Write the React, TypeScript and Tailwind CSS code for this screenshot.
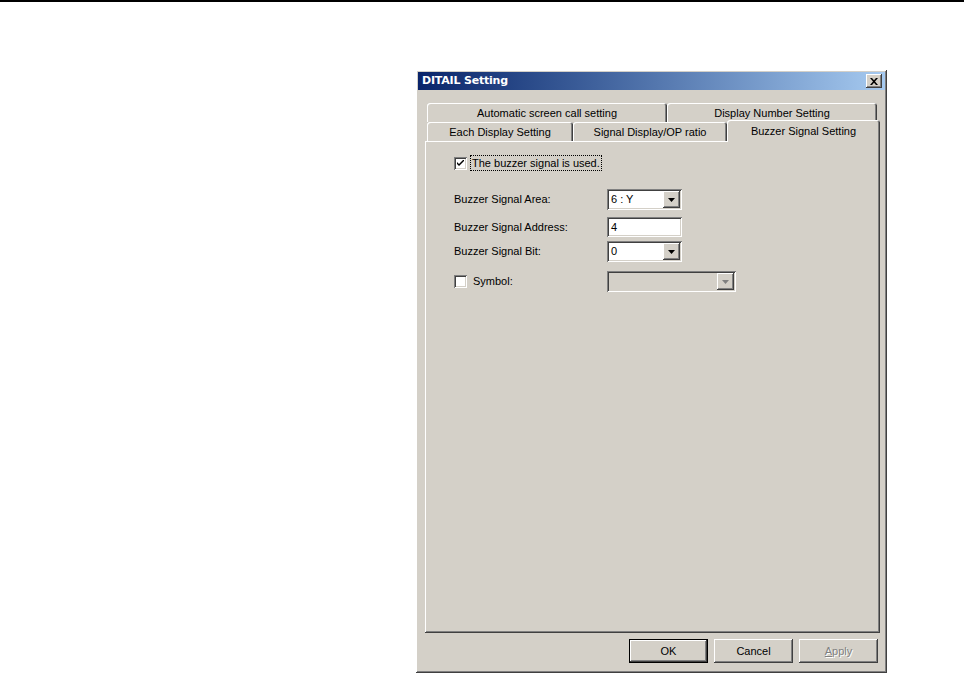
import React from 'react';

const raised =
  'shadow-[inset_-1px_-1px_#404040,inset_1px_1px_#ffffff,inset_-2px_-2px_#808080,inset_2px_2px_#d4d0c8]';
const sunken =
  'shadow-[inset_1px_1px_#808080,inset_-1px_-1px_#ffffff,inset_2px_2px_#404040,inset_-2px_-2px_#d4d0c8]';

function Arrow({ disabled }: { disabled?: boolean }) {
  return (
    <svg width="7" height="4" viewBox="0 0 7 4">
      <polygon points="0,0 7,0 3.5,4" fill={disabled ? '#808080' : '#000000'} />
    </svg>
  );
}

function Combo({ value, width, disabled }: { value: string; width: string; disabled?: boolean }) {
  return (
    <div className={`${width} h-[21px] ${sunken} ${disabled ? 'bg-[#d4d0c8]' : 'bg-white'} flex items-center p-[2px]`}>
      <div className="flex-1 pl-[2px] leading-none">{value}</div>
      <div className={`w-[17px] h-[17px] bg-[#d4d0c8] ${raised} flex items-center justify-center`}>
        <Arrow disabled={disabled} />
      </div>
    </div>
  );
}

function Check({ checked }: { checked?: boolean }) {
  return (
    <div className={`w-[13px] h-[13px] bg-white ${sunken} flex items-center justify-center`}>
      {checked && (
        <svg width="7" height="7" viewBox="0 0 7 7">
          <path d="M0 2 L0 4 L2 6 L7 1 L7 -1 L2 4 Z" fill="#000" />
        </svg>
      )}
    </div>
  );
}

function BackTab({ label, width }: { label: string; width: string }) {
  return (
    <div
      className={`${width} h-[19px] rounded-t-[3px] bg-[#d4d0c8] shadow-[inset_1px_1px_#ffffff,inset_-1px_0_#404040,inset_-2px_0_#808080] flex items-center justify-center pt-[2px]`}
    >
      {label}
    </div>
  );
}

export default function App() {
  return (
    <div className="min-h-screen bg-white text-black text-[11px] font-['Liberation_Sans',Arial,sans-serif]">
      <div className="h-[2px] bg-black" />

      <div className={`ml-[416px] mt-[68px] w-[471px] h-[603px] bg-[#d4d0c8] p-[2px] ${raised}`}>
        {/* Title bar */}
        <div className="h-[18px] bg-gradient-to-r from-[#0a246a] to-[#a6caf0] flex items-center justify-between pl-[4px] pr-[3px]">
          <span className="text-white font-bold text-[11px] font-['DejaVu_Sans',sans-serif] tracking-[-0.2px]">
            DITAIL Setting
          </span>
          <div className={`w-[16px] h-[14px] bg-[#d4d0c8] ${raised} flex items-center justify-center`}>
            <svg width="8" height="7" viewBox="0 0 8 7">
              <path d="M0 0h2l2 2.2L6 0h2L5 3.5 8 7H6L4 4.8 2 7H0l3-3.5z" fill="#000" />
            </svg>
          </div>
        </div>

        {/* Tabs */}
        <div className="mt-[13px] ml-[7px] w-[455px]">
          <div className="flex pl-[2px]">
            <BackTab label="Automatic screen call setting" width="w-[240px]" />
            <BackTab label="Display Number Setting" width="w-[210px]" />
          </div>
          <div className="flex pl-[2px] items-end">
            <BackTab label="Each Display Setting" width="w-[146px]" />
            <BackTab label="Signal Display/OP ratio" width="w-[154px]" />
            <div className="relative z-10 w-[153px] h-[22px] -mt-[2px] mb-[-1px] rounded-t-[3px] bg-[#d4d0c8] shadow-[inset_1px_1px_#ffffff,inset_-1px_0_#404040,inset_-2px_0_#808080] flex justify-center pt-[3px]">
              Buzzer Signal Setting
            </div>
          </div>

          {/* Panel */}
          <div className={`h-[492px] bg-[#d4d0c8] ${raised} pt-[14px] pl-[29px]`}>
            <div className="flex items-center h-[16px]">
              <Check checked />
              <span className="ml-[3px] border border-dotted border-black px-[1px] leading-[14px]">
                The buzzer signal is used.
              </span>
            </div>

            <div className="flex items-center mt-[18px]">
              <span className="w-[153px]">Buzzer Signal Area:</span>
              <Combo value="6 : Y" width="w-[75px]" />
            </div>

            <div className="flex items-center mt-[7px]">
              <span className="w-[153px]">Buzzer Signal Address:</span>
              <div className={`w-[75px] h-[20px] bg-white ${sunken} flex items-center pl-[4px]`}>4</div>
            </div>

            <div className="flex items-center mt-[4px]">
              <span className="w-[153px]">Buzzer Signal Bit:</span>
              <Combo value="0" width="w-[75px]" />
            </div>

            <div className="flex items-center mt-[9px]">
              <div className="w-[153px] flex items-center">
                <Check />
                <span className="ml-[6px]">Symbol:</span>
              </div>
              <Combo value="" width="w-[129px]" disabled />
            </div>
          </div>

          {/* Buttons */}
          <div className="flex justify-end gap-[6px] mt-[6px] pr-[2px]">
            <div className="w-[79px] h-[24px] border border-black">
              <div className={`w-full h-full ${raised} flex items-center justify-center`}>OK</div>
            </div>
            <div className={`w-[79px] h-[24px] ${raised} flex items-center justify-center`}>Cancel</div>
            <div className={`w-[79px] h-[24px] ${raised} flex items-center justify-center text-[#808080] [text-shadow:1px_1px_#ffffff]`}>
              <span>
                <span className="underline">A</span>pply
              </span>
            </div>
          </div>
        </div>
      </div>
    </div>
  );
}
